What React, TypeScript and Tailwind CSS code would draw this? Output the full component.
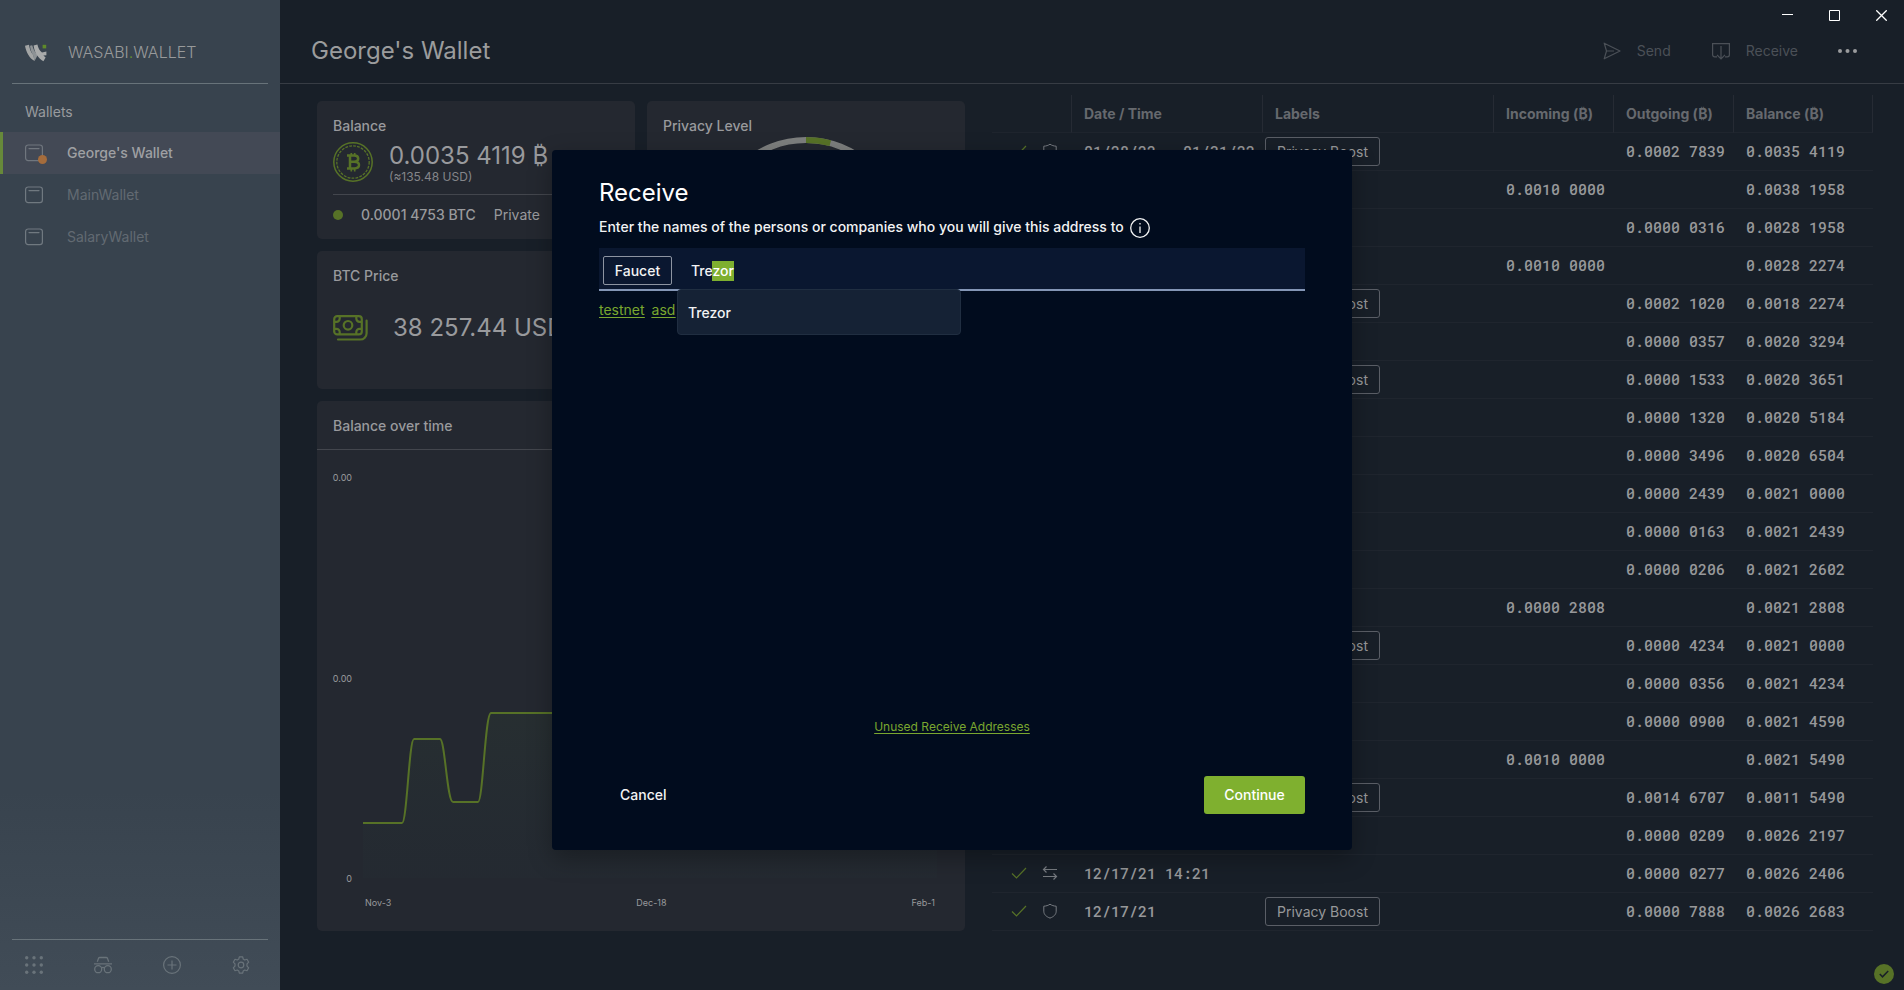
import { useEffect, useRef } from "react";
import type { ReactNode } from "react";

type Row = {
  kind?: "shield" | "swap";
  date?: string;
  boost?: boolean;
  incoming?: string;
  outgoing?: string;
  balance: string;
};

const rows: Row[] = [
  { kind: "shield", date: "01/28/22 - 01/31/22", boost: true, outgoing: "0.0002 7839", balance: "0.0035 4119" },
  { incoming: "0.0010 0000", balance: "0.0038 1958" },
  { outgoing: "0.0000 0316", balance: "0.0028 1958" },
  { incoming: "0.0010 0000", balance: "0.0028 2274" },
  { boost: true, outgoing: "0.0002 1020", balance: "0.0018 2274" },
  { outgoing: "0.0000 0357", balance: "0.0020 3294" },
  { boost: true, outgoing: "0.0000 1533", balance: "0.0020 3651" },
  { outgoing: "0.0000 1320", balance: "0.0020 5184" },
  { outgoing: "0.0000 3496", balance: "0.0020 6504" },
  { outgoing: "0.0000 2439", balance: "0.0021 0000" },
  { outgoing: "0.0000 0163", balance: "0.0021 2439" },
  { outgoing: "0.0000 0206", balance: "0.0021 2602" },
  { incoming: "0.0000 2808", balance: "0.0021 2808" },
  { boost: true, outgoing: "0.0000 4234", balance: "0.0021 0000" },
  { outgoing: "0.0000 0356", balance: "0.0021 4234" },
  { outgoing: "0.0000 0900", balance: "0.0021 4590" },
  { incoming: "0.0010 0000", balance: "0.0021 5490" },
  { boost: true, outgoing: "0.0014 6707", balance: "0.0011 5490" },
  { outgoing: "0.0000 0209", balance: "0.0026 2197" },
  { kind: "swap", date: "12/17/21 14:21", outgoing: "0.0000 0277", balance: "0.0026 2406" },
  { kind: "shield", date: "12/17/21", boost: true, outgoing: "0.0000 7888", balance: "0.0026 2683" },
];

function Logo() {
  return (
    <svg viewBox="0 0 22 18" className="h-[18px] w-[22px]" aria-hidden="true">
      <path d="M0 1.800 4 .8C4.600 5 6 8.600 8.400 11L9.600 17C4.400 14.400 1.200 8.200 0 1.800Z" fill="#a3a5a5" />
      <path d="M5 1.800 7.200 1.200C8.200 5.200 10 8.400 12.800 10.800L9.600 17 8.200 11.400C6.400 8.800 5.400 5.600 5 1.800Z" fill="#8d9295" />
      <path d="M8.600 1.400 12.400.4C13.200 4 14.600 6.400 17 8.600L21.400 7.600V11.200L18.400 11.600 20.600 13.600 18.400 17.200C13 14 9.600 8.800 8.600 1.400Z" fill="#a9abab" />
      <rect x="17.600" y=".8" width="3.600" height="3.600" fill="#5f8a2a" />
    </svg>
  );
}

function WalletIcon() {
  return (
    <svg viewBox="0 0 18 18" className="size-[18px]" fill="none" stroke="currentColor" aria-hidden="true">
      <rect x=".6" y="1" width="16.800" height="15.600" rx="2.600" strokeWidth="1.200" />
      <path d="M4 4.600h10" strokeWidth="1.200" strokeLinecap="round" />
    </svg>
  );
}

function CoinIcon() {
  return (
    <svg viewBox="0 0 40 40" className="size-10" fill="none" stroke="#577227" aria-hidden="true">
      <circle cx="20" cy="20" r="19.200" strokeWidth="1.500" />
      <circle cx="20" cy="20" r="16.200" strokeWidth="1.300" strokeDasharray="2.800 1.200" />
      <path
        d="M14 13.600h7.200c2.600 0 4 1.200 4 3s-1.400 3.100-4 3.100h-4.200m4.200 0c3.200 0 4.800 1.300 4.800 3.400s-1.600 3.300-4.800 3.300H14m3-12.800v12.800"
        strokeWidth="2.500"
      />
      <path d="M18.300 11v3m3.400-3v3m-3.400 12.500v3m3.400-3v3" strokeWidth="1.700" />
    </svg>
  );
}

function MoneyIcon() {
  return (
    <svg viewBox="0 0 35 27" className="h-[27px] w-[35px]" fill="none" stroke="#577227" strokeWidth="2.200" aria-hidden="true">
      <rect x="1.200" y="1.200" width="27.600" height="18.200" rx="3" />
      <circle cx="15" cy="10.300" r="4.300" />
      <path d="M1.200 6.800h2.300a3.200 3.200 0 0 0 3.200-3.200V1.200M28.800 6.800h-2.300a3.200 3.200 0 0 1-3.200-3.200V1.200M1.200 13.800h2.300a3.200 3.200 0 0 1 3.200 3.200v2.400M28.800 13.800h-2.300a3.200 3.200 0 0 0-3.200 3.200v2.400" />
      <path d="M33.600 5.500v12.700a6.300 6.300 0 0 1-6.300 6.300H5" strokeLinecap="round" />
    </svg>
  );
}

function Card({ title, className, children }: { title: string; className?: string; children?: ReactNode }) {
  return (
    <section className={`rounded-[5px] bg-[#242830] px-4 pt-[15px] ${className ?? ""}`}>
      <h2 className="text-sm leading-5 font-medium">{title}</h2>
      {children}
    </section>
  );
}

const wallets = [
  { name: "George's Wallet", active: true },
  { name: "MainWallet", active: false },
  { name: "SalaryWallet", active: false },
];

function Sidebar() {
  return (
    <aside className="flex w-[280px] shrink-0 flex-col bg-linear-to-b from-[#38434e] from-80% to-[#414c57]">
      <div className="mx-3 flex h-[84px] items-end border-b border-[#68737a] px-[13px] pb-[21px]">
        <Logo />
        <span className="ml-[21px] text-base leading-5 font-light text-[#989a9b]">
          WASABI<span className="text-[#648f2c]">.</span>WALLET
        </span>
      </div>
      <h2 className="mt-[18px] mb-[10px] px-[25px] text-sm leading-5 text-[#999b9e]">Wallets</h2>
      <nav className="flex flex-col">
        {wallets.map((w) => (
          <a
            key={w.name}
            href="#wallet"
            className={
              w.active
                ? "flex h-[42px] items-center gap-6 border-l-[3px] border-[#67893a] bg-[#434955] pl-[22px] text-sm font-medium text-[#9fa0a3]"
                : "flex h-[42px] items-center gap-6 border-l-[3px] border-transparent pl-[22px] text-sm text-[#626a72]"
            }
          >
            <span className={w.active ? "relative text-[#70767e]" : "relative text-[#707980]"}>
              <WalletIcon />
              {w.active && <span className="absolute top-[11px] left-[13px] size-[9px] rounded-full bg-[#a56c3c]" />}
            </span>
            {w.name}
          </a>
        ))}
      </nav>
      <div className="mx-3 mt-auto flex h-[51px] items-center justify-between border-t border-[#68737a] pr-[18px] pl-[13px] text-[#69737a]">
        <button aria-label="Apps">
          <svg viewBox="0 0 18 18" className="size-[18px]" fill="currentColor">
            {[1.7, 9, 16.3].map((y) => [1.7, 9, 16.3].map((x) => <circle key={`${x}-${y}`} cx={x} cy={y} r="1.7" />))}
          </svg>
        </button>
        <button aria-label="Discreet mode">
          <svg viewBox="0 0 18 18" className="size-[18px]" fill="none" stroke="currentColor" strokeWidth="1.300">
            <circle cx="4.200" cy="13.200" r="3.500" />
            <circle cx="13.800" cy="13.200" r="3.500" />
            <path d="M7.400 12c1-.7 2.200-.7 3.200 0M0 7.800h18M3.300 5.800l1.200-3.400c.2-.6.7-.9 1.300-.9h6.400c.6 0 1.100.3 1.300.9l1.200 3.400" />
          </svg>
        </button>
        <button aria-label="Add wallet">
          <svg viewBox="0 0 18 18" className="size-[18px]" fill="none" stroke="currentColor" strokeWidth="1.200">
            <circle cx="9" cy="9" r="8.400" />
            <path d="M9 4.500v9M4.500 9h9" />
          </svg>
        </button>
        <button aria-label="Settings">
          <svg viewBox="0 0 18 18" className="size-[18px]" fill="none" stroke="currentColor" strokeWidth="1.200" strokeLinejoin="round">
            <circle cx="9" cy="9" r="2.800" />
            <path d="M7.300.8h3.400l.5 2.300 1.500.9 2.300-.7 1.700 2.900L15 7.900v2.200l1.700 1.700-1.700 2.900-2.300-.7-1.500.9-.5 2.300H7.300l-.5-2.300-1.500-.9-2.300.7-1.700-2.900L3 10.100V7.900L1.300 6.200 3 3.300l2.300.7 1.500-.9z" />
          </svg>
        </button>
      </div>
    </aside>
  );
}

function Header() {
  return (
    <header className="flex h-[84px] items-end justify-between border-b border-[#373c44] pr-[47px] pb-4 pl-[31px]">
      <h1 className="text-2xl leading-8 text-[#9b9c9d]">George's Wallet</h1>
      <div className="flex h-8 items-center text-sm text-[#4b5057]">
        <button className="flex items-center gap-4">
          <svg viewBox="0 0 18 18" className="size-[18px]" fill="none" stroke="currentColor" strokeWidth="1.200" strokeLinejoin="round">
            <path d="M1.200 1.200 17 9 1.200 16.800 3.500 9zM3.500 9H11" />
          </svg>
          Send
        </button>
        <button className="ml-[41px] flex items-center gap-4">
          <svg viewBox="0 0 18 18" className="size-[18px]" fill="none" stroke="currentColor" strokeWidth="1.200">
            <path d="M5 14.800H2.600a2 2 0 0 1-2-2V1.600h16.800v11.200a2 2 0 0 1-2 2H13M9 4v12.600M5 12.800l4 4 4-4" />
          </svg>
          Receive
        </button>
        <button className="ml-10 text-[#9a9b9d]" aria-label="More">
          <svg viewBox="0 0 19 4" className="h-1 w-[19px]" fill="currentColor">
            <circle cx="2" cy="2" r="2" />
            <circle cx="9.500" cy="2" r="2" />
            <circle cx="17" cy="2" r="2" />
          </svg>
        </button>
      </div>
    </header>
  );
}

function BalanceChart() {
  return (
    <section className="flex flex-1 flex-col rounded-[5px] bg-[#242830]">
      <h2 className="border-b border-[#43464d] px-4 pt-[15px] pb-[13px] text-sm leading-5 font-medium">Balance over time</h2>
      <div className="flex flex-1 pt-[21px]">
        <div className="flex w-[46px] flex-col justify-between pr-[11px] pb-[10px] text-right text-[9px] leading-[14px]">
          <span>0.00</span>
          <span>0.00</span>
          <span>0</span>
        </div>
        <svg viewBox="0 0 574 401" preserveAspectRatio="none" className="mt-[6px] mr-7 h-[401px] flex-1" aria-label="Balance history">
          <defs>
            <linearGradient id="area" x1="0" y1="0" x2="0" y2="1">
              <stop offset="0" stopColor="#6a9a2a" stopOpacity=".08" />
              <stop offset="1" stopColor="#2a7a6a" stopOpacity=".02" />
            </linearGradient>
          </defs>
          <path
            d="M0 346H39C44 346 46 262 51 262H77C82 262 84 325 90 325H115C120 325 122 236 128 236H300C306 236 308 160 314 160H574V401H0Z"
            fill="url(#area)"
          />
          <path
            d="M0 346H39C44 346 46 262 51 262H77C82 262 84 325 90 325H115C120 325 122 236 128 236H300"
            fill="none"
            stroke="#577227"
            strokeWidth="2"
          />
        </svg>
      </div>
      <div className="mr-[30px] mb-[21px] ml-12 flex justify-between text-[9px] leading-[14px]">
        <span>Nov-3</span>
        <span>Dec-18</span>
        <span>Feb-1</span>
      </div>
    </section>
  );
}

function Tiles() {
  return (
    <div className="mt-[6px] flex w-[648px] shrink-0 flex-col gap-3 text-[#999a9d]">
      <div className="grid grid-cols-2 grid-rows-[138px_138px] gap-3">
        <Card title="Balance">
          <div className="mt-[3px] flex h-14 gap-4 border-b border-[#43464d] pt-[3px]">
            <CoinIcon />
            <div>
              <p className="text-2xl leading-[27px]">0.0035 4119 ₿</p>
              <p className="text-xs leading-4 text-[#84868a]">(≈135.48 USD)</p>
            </div>
          </div>
          <div className="mt-[10px] flex items-center text-sm leading-5">
            <span className="mr-[18px] size-[10px] rounded-full bg-[#577227]" />
            <span className="mr-[18px] font-medium">0.0001 4753 BTC</span>
            <span>Private</span>
          </div>
        </Card>
        <Card title="Privacy Level" className="row-span-2">
          <svg viewBox="0 0 194 194" className="mx-auto mt-px size-[194px]" fill="none" strokeWidth="6" aria-hidden="true">
            <circle cx="97" cy="97" r="94" stroke="#7d7f7e" />
            <path d="M97 3A94 94 0 0 1 121.300 6.200" stroke="#577227" />
          </svg>
        </Card>
        <Card title="BTC Price">
          <div className="mt-[26px] flex items-center gap-[25px]">
            <MoneyIcon />
            <p className="text-2xl leading-8 whitespace-nowrap">38 257.44 USD</p>
          </div>
        </Card>
      </div>
      <BalanceChart />
    </div>
  );
}

function KindIcon({ kind }: { kind: "shield" | "swap" }) {
  return (
    <svg viewBox="0 0 16 16" className="size-4" fill="none" stroke="#777b81" aria-hidden="true">
      {kind === "shield" ? (
        <path d="M8 1.200c1.800 1.200 3.800 1.900 6.200 2v5c0 3.200-2.300 5.400-6.200 6.900-3.900-1.500-6.200-3.700-6.200-6.900v-5C4.200 3.100 6.200 2.400 8 1.200z" />
      ) : (
        <path d="M15 4.500H1.500M4.500 1.500l-3 3 3 3M1 11.500h13.500M11.500 8.500l3 3-3 3" strokeWidth="1.200" />
      )}
    </svg>
  );
}

const headings = ["", "Date / Time", "Labels", "Incoming (₿)", "Outgoing (₿)", "Balance (₿)"];

function History() {
  return (
    <table className="flex-1 table-fixed border-separate border-spacing-0 self-start text-[#97989a]">
      <colgroup>
        <col className="w-20" />
        <col className="w-[191px]" />
        <col />
        <col className="w-[120px]" />
        <col className="w-[120px]" />
        <col className="w-[139px]" />
      </colgroup>
      <thead>
        <tr>
          {headings.map((h) => (
            <th
              key={h}
              className="h-[38px] border-r border-b border-[#262b34] border-b-[#1f252e] pl-3 text-left text-sm font-bold text-[#66696e]"
            >
              {h}
            </th>
          ))}
        </tr>
      </thead>
      <tbody className="font-['Roboto_Mono','DejaVu_Sans_Mono',monospace] text-[15px] leading-5 font-medium">
        {rows.map((r, i) => (
          <tr key={i}>
            <td className="h-[38px] border-b border-[#1f252e] p-0 pb-[2px]">
              {r.kind && (
                <span className="flex items-center gap-[15px] pl-[19px]">
                  <svg viewBox="0 0 16 16" className="size-4" fill="none" stroke="#577227" strokeWidth="1.200" aria-hidden="true">
                    <path d="m1 8.500 4.500 4.500L15 3" />
                  </svg>
                  <KindIcon kind={r.kind} />
                </span>
              )}
            </td>
            <td className="border-b border-[#1f252e] p-0 pb-[2px] pl-3 whitespace-nowrap">{r.date}</td>
            <td className="border-b border-[#1f252e] p-0 pl-[2px]">
              {r.boost && (
                <span className="flex h-[29px] w-[115px] items-center justify-center rounded-[3px] border border-[#5a5e66] font-[Inter,sans-serif] text-sm font-normal whitespace-nowrap">
                  Privacy Boost
                </span>
              )}
            </td>
            <td className="border-b border-[#1f252e] p-0 pb-[2px] pl-3 whitespace-nowrap">{r.incoming}</td>
            <td className="border-b border-[#1f252e] p-0 pb-[2px] pl-3 whitespace-nowrap">{r.outgoing}</td>
            <td className="border-b border-[#1f252e] p-0 pb-[2px] pl-3 whitespace-nowrap">{r.balance}</td>
          </tr>
        ))}
      </tbody>
    </table>
  );
}

function WindowControls() {
  return (
    <div className="absolute top-0 right-0 flex h-[31px] items-center gap-9 pr-[17px] text-white">
      <button aria-label="Minimize">
        <svg viewBox="0 0 11 11" className="size-[11px]" stroke="currentColor">
          <path d="M0 4.500h11" />
        </svg>
      </button>
      <button aria-label="Maximize">
        <svg viewBox="0 0 11 11" className="size-[11px]" fill="none" stroke="currentColor">
          <path d="M.5.5h10v10H.5z" />
        </svg>
      </button>
      <button aria-label="Close">
        <svg viewBox="0 0 11 11" className="size-[11px]" stroke="currentColor" strokeWidth="1.300">
          <path d="m.3.3 10.400 10.400M10.700.3.3 10.700" />
        </svg>
      </button>
    </div>
  );
}

function ReceiveDialog() {
  const field = useRef<HTMLInputElement>(null);

  useEffect(() => {
    field.current?.focus();
    field.current?.setSelectionRange(3, 6);
  }, []);

  return (
    <div className="absolute inset-0 flex items-center justify-center pt-[10px]">
      <div
        role="dialog"
        aria-labelledby="dialog-title"
        className="flex min-h-[700px] w-[800px] flex-col rounded-[4px] bg-[#010c1e] px-[47px] pt-[27px] pb-9 text-sm font-medium text-[#f2f3f4] shadow-[0_8px_24px_rgba(0,0,0,0.3)]"
      >
        <h2 id="dialog-title" className="text-2xl leading-8 font-normal text-white">
          Receive
        </h2>
        <div className="mt-[7px] flex items-center gap-[6px]">
          <label htmlFor="label-field" className="pb-[2px] leading-[22px]">
            Enter the names of the persons or companies who you will give this address to
          </label>
          <svg viewBox="0 0 20 20" className="size-5" fill="none" stroke="currentColor" aria-hidden="true">
            <circle cx="10" cy="10" r="9.300" strokeWidth="1.300" />
            <path d="M10 8.500V15M10 5v1.500" strokeWidth="1.300" />
          </svg>
        </div>
        <div className="relative mt-2 flex h-[43px] items-center border-b-2 border-[#8496b6] bg-[#0a1730] pt-1 pl-1">
          <span className="flex h-[29px] w-[69px] items-center justify-center rounded-[2px] border border-[#8d94a2]">Faucet</span>
          <input
            id="label-field"
            ref={field}
            defaultValue="Trezor"
            className="ml-[19px] flex-1 bg-transparent leading-5 outline-none selection:bg-[#7fb02ffd] selection:text-white"
          />
          <ul className="absolute top-[41px] left-[78px] h-[46px] w-[284px] rounded-[4px] border border-[#202e41] bg-[#152235]">
            <li className="px-[10px] leading-[46px]">Trezor</li>
          </ul>
        </div>
        <div className="mt-[9px] flex gap-[7px] font-normal text-[#7aa72f] underline underline-offset-2">
          <a href="#testnet">testnet</a>
          <a href="#asd">asd</a>
        </div>
        <a href="#unused" className="mt-auto self-center text-xs leading-4 font-normal text-[#7aa72f] underline underline-offset-2">
          Unused Receive Addresses
        </a>
        <div className="mt-[41px] flex justify-between">
          <button className="h-[38px] px-[21px]">Cancel</button>
          <button className="h-[38px] w-[101px] rounded-[3px] bg-[#7fb02f] text-white">Continue</button>
        </div>
      </div>
    </div>
  );
}

export default function App() {
  return (
    <div className="relative flex min-h-screen bg-[#181f28] font-[Inter,sans-serif]">
      <Sidebar />
      <main className="relative flex min-w-0 flex-1 flex-col">
        <Header />
        <div className="flex gap-[27px] pt-[11px] pr-[31px] pl-[37px]">
          <Tiles />
          <History />
        </div>
        <span className="absolute right-[10px] bottom-[6px] flex size-5 items-center justify-center rounded-full bg-[#577227]">
          <svg viewBox="0 0 10 8" className="h-2 w-[10px]" fill="none" stroke="#181f28" strokeWidth="1.500" aria-hidden="true">
            <path d="M.8 4 3.500 6.800 9.200 1" />
          </svg>
        </span>
      </main>
      <ReceiveDialog />
      <WindowControls />
    </div>
  );
}
